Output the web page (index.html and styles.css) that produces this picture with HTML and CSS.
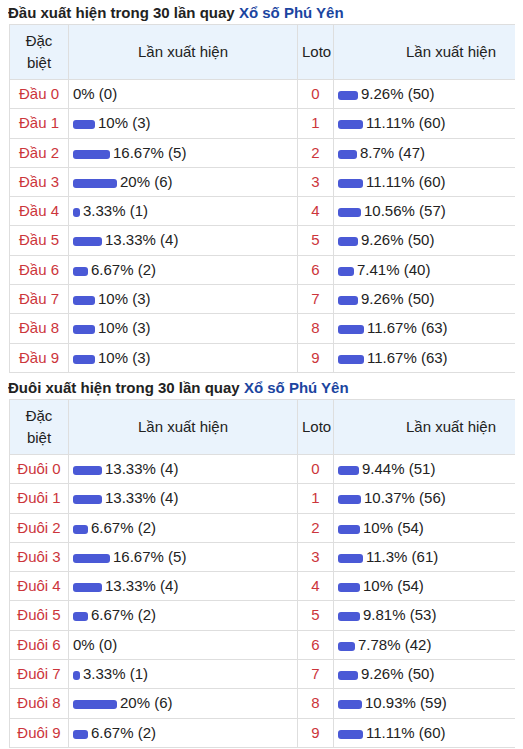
FILE: index.html
```html
<!DOCTYPE html>
<html lang="vi">
<head>
    <meta charset="UTF-8">
    <meta name="viewport" content="width=device-width, initial-scale=1.0">
    <title>Thống kê đầu đuôi Xổ số Phú Yên</title>
    <link rel="stylesheet" href="styles.css">
</head>
<body>
    <h2 class="title">Đầu xuất hiện trong 30 lần quay <a href="#">Xổ số Phú Yên</a></h2>
    <table class="stat">
        <thead>
            <tr>
                <th class="col-num">Đặc<br>biệt</th>
                <th class="col-bar">Lần xuất hiện</th>
                <th class="col-loto">Loto</th>
                <th class="col-bar2">Lần xuất hiện</th>
            </tr>
        </thead>
        <tbody>
            <tr><td class="num">Đầu 0</td><td>0% (0)</td><td class="num">0</td><td><span class="bar" style="width:20px"></span>9.26% (50)</td></tr>
            <tr><td class="num">Đầu 1</td><td><span class="bar" style="width:22px"></span>10% (3)</td><td class="num">1</td><td><span class="bar" style="width:25px"></span>11.11% (60)</td></tr>
            <tr><td class="num">Đầu 2</td><td><span class="bar" style="width:37px"></span>16.67% (5)</td><td class="num">2</td><td><span class="bar" style="width:19px"></span>8.7% (47)</td></tr>
            <tr><td class="num">Đầu 3</td><td><span class="bar" style="width:44px"></span>20% (6)</td><td class="num">3</td><td><span class="bar" style="width:25px"></span>11.11% (60)</td></tr>
            <tr><td class="num">Đầu 4</td><td><span class="bar" style="width:7px"></span>3.33% (1)</td><td class="num">4</td><td><span class="bar" style="width:23px"></span>10.56% (57)</td></tr>
            <tr><td class="num">Đầu 5</td><td><span class="bar" style="width:29px"></span>13.33% (4)</td><td class="num">5</td><td><span class="bar" style="width:20px"></span>9.26% (50)</td></tr>
            <tr><td class="num">Đầu 6</td><td><span class="bar" style="width:15px"></span>6.67% (2)</td><td class="num">6</td><td><span class="bar" style="width:16px"></span>7.41% (40)</td></tr>
            <tr><td class="num">Đầu 7</td><td><span class="bar" style="width:22px"></span>10% (3)</td><td class="num">7</td><td><span class="bar" style="width:20px"></span>9.26% (50)</td></tr>
            <tr><td class="num">Đầu 8</td><td><span class="bar" style="width:22px"></span>10% (3)</td><td class="num">8</td><td><span class="bar" style="width:26px"></span>11.67% (63)</td></tr>
            <tr><td class="num">Đầu 9</td><td><span class="bar" style="width:22px"></span>10% (3)</td><td class="num">9</td><td><span class="bar" style="width:26px"></span>11.67% (63)</td></tr>
        </tbody>
    </table>

    <h2 class="title">Đuôi xuất hiện trong 30 lần quay <a href="#">Xổ số Phú Yên</a></h2>
    <table class="stat">
        <thead>
            <tr>
                <th class="col-num">Đặc<br>biệt</th>
                <th class="col-bar">Lần xuất hiện</th>
                <th class="col-loto">Loto</th>
                <th class="col-bar2">Lần xuất hiện</th>
            </tr>
        </thead>
        <tbody>
            <tr><td class="num">Đuôi 0</td><td><span class="bar" style="width:29px"></span>13.33% (4)</td><td class="num">0</td><td><span class="bar" style="width:21px"></span>9.44% (51)</td></tr>
            <tr><td class="num">Đuôi 1</td><td><span class="bar" style="width:29px"></span>13.33% (4)</td><td class="num">1</td><td><span class="bar" style="width:23px"></span>10.37% (56)</td></tr>
            <tr><td class="num">Đuôi 2</td><td><span class="bar" style="width:15px"></span>6.67% (2)</td><td class="num">2</td><td><span class="bar" style="width:22px"></span>10% (54)</td></tr>
            <tr><td class="num">Đuôi 3</td><td><span class="bar" style="width:37px"></span>16.67% (5)</td><td class="num">3</td><td><span class="bar" style="width:25px"></span>11.3% (61)</td></tr>
            <tr><td class="num">Đuôi 4</td><td><span class="bar" style="width:29px"></span>13.33% (4)</td><td class="num">4</td><td><span class="bar" style="width:22px"></span>10% (54)</td></tr>
            <tr><td class="num">Đuôi 5</td><td><span class="bar" style="width:15px"></span>6.67% (2)</td><td class="num">5</td><td><span class="bar" style="width:22px"></span>9.81% (53)</td></tr>
            <tr><td class="num">Đuôi 6</td><td>0% (0)</td><td class="num">6</td><td><span class="bar" style="width:17px"></span>7.78% (42)</td></tr>
            <tr><td class="num">Đuôi 7</td><td><span class="bar" style="width:7px"></span>3.33% (1)</td><td class="num">7</td><td><span class="bar" style="width:20px"></span>9.26% (50)</td></tr>
            <tr><td class="num">Đuôi 8</td><td><span class="bar" style="width:44px"></span>20% (6)</td><td class="num">8</td><td><span class="bar" style="width:24px"></span>10.93% (59)</td></tr>
            <tr><td class="num">Đuôi 9</td><td><span class="bar" style="width:15px"></span>6.67% (2)</td><td class="num">9</td><td><span class="bar" style="width:25px"></span>11.11% (60)</td></tr>
        </tbody>
    </table>
</body>
</html>
```

FILE: styles.css
```css
body {
    margin: 0 8px;
    overflow: hidden;
    font-family: "Liberation Sans", Arial, sans-serif;
    font-size: 15px;
    color: #222;
}
.title {
    margin: 0;
    padding: 3px 0 1px;
    font-size: 15px;
    line-height: 20px;
    font-weight: bold;
}
.title a {
    color: #1b45a0;
    text-decoration: none;
}
.stat {
    width: 560px;
    margin: 0 0 2px 1px;
    border-collapse: collapse;
    table-layout: fixed;
    line-height: 20.3px;
}
.stat th,
.stat td {
    border: 1px solid #dedede;
    padding: 4px;
}
.stat th {
    background: #eaf3fc;
    font-weight: normal;
    line-height: 22px;
    padding: 5px 4px;
}
.col-num { width: 50px; }
.col-bar { width: 220px; }
.col-loto { width: 27px; }
.stat td.num {
    text-align: center;
    color: #cc353b;
}
.bar {
    display: inline-block;
    height: 9px;
    margin-right: 3px;
    border-radius: 3px;
    background: #4a59d6;
    vertical-align: -1px;
}
```
